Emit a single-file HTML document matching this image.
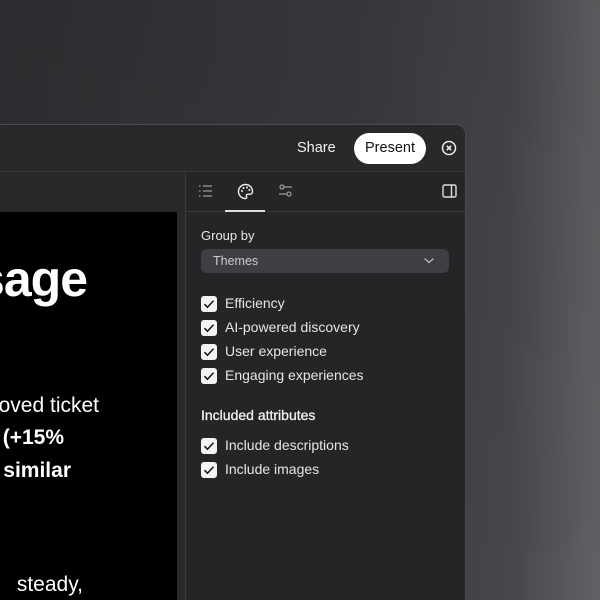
<!DOCTYPE html>
<html style="overflow:hidden;width:600px;height:600px"><head><style>
body{margin:0;width:600px;height:600px;overflow:hidden;position:relative;font-family:"Liberation Sans",sans-serif;
background:linear-gradient(90deg,#2f3033 0%,#3a3b3f 60%,#46474b 85%,#5f6063 99%,#5f6063 100%);}
.bgtop{position:absolute;left:0;top:0;width:600px;height:600px;background:linear-gradient(180deg,rgba(0,0,0,0.08),rgba(0,0,0,0));}
.win{position:absolute;left:-21px;top:124px;width:485px;height:480px;background:#29292c;border:1px solid #4a4a4e;border-radius:0 10px 0 0;overflow:hidden;}
.hdr{position:absolute;left:0;top:0;width:485px;height:46px;border-bottom:1px solid #3a3a3e;}
.share{position:absolute;left:317px;top:15px;color:#f0f0f0;font-size:14.5px;}
.present{position:absolute;left:374px;top:8px;width:72px;height:31px;border-radius:16px;background:#fff;color:#111;font-size:14.5px;line-height:31px;text-align:center;}
.slide{position:absolute;left:20px;top:87px;width:177px;height:400px;background:#000;color:#fff;}
.panel{position:absolute;left:205px;top:47px;width:280px;height:440px;background:#252528;border-left:1px solid #3a3a3e;}
.tabs{height:39px;border-bottom:1px solid #3a3a3e;position:relative;}
.lbl{position:absolute;color:#e6e6e6;font-size:14px;}
.cb{position:absolute;width:16px;height:16px;background:#f4f4f4;border-radius:3px;}
.cb svg{position:absolute;left:2px;top:2px}
</style></head><body>
<div class="bgtop"></div>
<div class="win">
 <div class="hdr">
  <div class="share">Share</div>
  <div class="present">Present</div>
  <svg style="position:absolute;left:461px;top:15px" width="16" height="16" viewBox="0 0 16 16"><circle cx="8" cy="8" r="6.5" fill="none" stroke="#eee" stroke-width="1.5"/><path d="M5.8 5.8l4.4 4.4M10.2 5.8l-4.4 4.4" stroke="#eee" stroke-width="1.6"/></svg>
 </div>
 <div class="slide">
  <div style="position:absolute;right:90px;top:38px;font-size:50px;font-weight:bold;letter-spacing:-1px;white-space:nowrap">Usage</div>
  <div style="position:absolute;right:78px;top:182px;font-size:21px;white-space:nowrap">improved ticket</div>
  <div style="position:absolute;right:113px;top:214px;font-size:21px;font-weight:bold;white-space:nowrap">(+15%</div>
  <div style="position:absolute;right:106px;top:247px;font-size:21px;font-weight:bold;white-space:nowrap">similar</div>
  <div style="position:absolute;right:94px;top:361px;font-size:21px;white-space:nowrap">steady,</div>
 </div>
 <div class="panel">
  <div class="tabs">
   <svg style="position:absolute;left:12px;top:12px" width="16" height="14" viewBox="0 0 16 14"><g stroke="#8a8a8e" stroke-width="1.4"><path d="M1 2h1.5M5 2h9M1 7h1.5M5 7h9M1 12h1.5M5 12h9"/></g></svg>
   <svg style="position:absolute;left:51px;top:11px" width="17" height="17" viewBox="0 0 17 17"><path d="M8.5 1.5a7 7 0 1 0 0 14c1.2 0 1.5-1 1-2-.6-1.2.2-2.3 1.5-2.3h2a2.5 2.5 0 0 0 2.5-2.5C15.5 4.5 12.4 1.5 8.5 1.5z" fill="none" stroke="#eee" stroke-width="1.4"/><circle cx="5" cy="8" r="1" fill="#eee"/><circle cx="6.5" cy="5" r="1" fill="#eee"/><circle cx="10" cy="4.5" r="1" fill="#eee"/><circle cx="12.3" cy="7" r="1" fill="#eee"/></svg>
   <div style="position:absolute;left:39px;top:38px;width:40px;height:2px;background:#ddd"></div>
   <svg style="position:absolute;left:92px;top:11px" width="16" height="16" viewBox="0 0 16 16"><g stroke="#9a9a9e" stroke-width="1.3" fill="none"><circle cx="4" cy="4" r="2"/><path d="M6 4h8"/><circle cx="11" cy="11" r="2"/><path d="M1 11h8"/></g></svg>
   <svg style="position:absolute;left:256px;top:12px" width="15" height="15" viewBox="0 0 15 15"><rect x="1" y="1" width="13" height="12" rx="1.5" fill="none" stroke="#ddd" stroke-width="1.4"/><path d="M9.5 1v12" stroke="#ddd" stroke-width="1.4"/></svg>
  </div>
  <div class="lbl" style="left:15px;top:56px;font-size:13px">Group by</div>
  <div style="position:absolute;left:15px;top:77px;width:248px;height:24px;background:#3e3f44;border-radius:6px;color:#ccc;font-size:12.5px;line-height:25px;text-indent:12px">Themes
   <svg style="position:absolute;left:222px;top:8px" width="12" height="8" viewBox="0 0 12 8"><path d="M1.5 1.5l4.5 4 4.5-4" stroke="#bbb" stroke-width="1.3" fill="none"/></svg></div>
  <div class="cb" style="left:15px;top:124px"><svg width="12" height="12" viewBox="0 0 12 12"><path d="M1.5 6.2l3 3 6-6.5" stroke="#111" stroke-width="1.5" fill="none"/></svg></div>
  <div class="lbl" style="left:39px;top:123px">Efficiency</div>
  <div class="cb" style="left:15px;top:148px"><svg width="12" height="12" viewBox="0 0 12 12"><path d="M1.5 6.2l3 3 6-6.5" stroke="#111" stroke-width="1.5" fill="none"/></svg></div>
  <div class="lbl" style="left:39px;top:147px">AI-powered discovery</div>
  <div class="cb" style="left:15px;top:172px"><svg width="12" height="12" viewBox="0 0 12 12"><path d="M1.5 6.2l3 3 6-6.5" stroke="#111" stroke-width="1.5" fill="none"/></svg></div>
  <div class="lbl" style="left:39px;top:171px">User experience</div>
  <div class="cb" style="left:15px;top:196px"><svg width="12" height="12" viewBox="0 0 12 12"><path d="M1.5 6.2l3 3 6-6.5" stroke="#111" stroke-width="1.5" fill="none"/></svg></div>
  <div class="lbl" style="left:39px;top:195px">Engaging experiences</div>
  <div class="lbl" style="left:15px;top:235px;font-size:14px;color:#f2f2f2;-webkit-text-stroke:0.3px #f2f2f2">Included attributes</div>
  <div class="cb" style="left:15px;top:266px"><svg width="12" height="12" viewBox="0 0 12 12"><path d="M1.5 6.2l3 3 6-6.5" stroke="#111" stroke-width="1.5" fill="none"/></svg></div>
  <div class="lbl" style="left:39px;top:265px">Include descriptions</div>
  <div class="cb" style="left:15px;top:290px"><svg width="12" height="12" viewBox="0 0 12 12"><path d="M1.5 6.2l3 3 6-6.5" stroke="#111" stroke-width="1.5" fill="none"/></svg></div>
  <div class="lbl" style="left:39px;top:289px">Include images</div>
 </div>
</div>
</body></html>
